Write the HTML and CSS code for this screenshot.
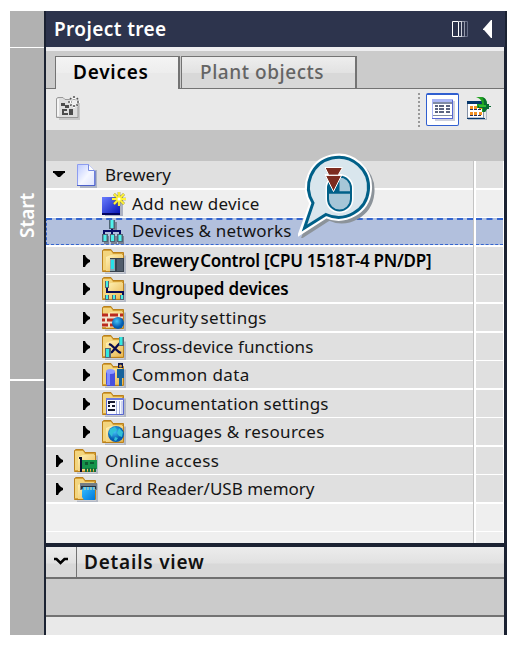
FILE: index.html
```html
<!DOCTYPE html>
<html lang="en">
<head>
<meta charset="utf-8">
<title>Project tree</title>
<link rel="stylesheet" href="styles.css">
</head>
<body>
<svg class="defs" width="0" height="0" aria-hidden="true">
  <defs>
    <linearGradient id="gold" x1="0" y1="0" x2="1" y2="1"><stop offset="0" stop-color="#fff3b8"/><stop offset="1" stop-color="#e9b64f"/></linearGradient>
    <linearGradient id="paper" x1="0" y1="0" x2="1" y2="1"><stop offset="0" stop-color="#bdcaff"/><stop offset=".55" stop-color="#f5f7ff"/><stop offset="1" stop-color="#dde3ff"/></linearGradient>
    <linearGradient id="blue" x1="0" y1="0" x2="1" y2="1"><stop offset="0" stop-color="#6a7dff"/><stop offset="1" stop-color="#0714b4"/></linearGradient>
    <linearGradient id="sky" x1="0" y1="0" x2="1" y2="1"><stop offset="0" stop-color="#36bfff"/><stop offset="1" stop-color="#0077da"/></linearGradient>
    <radialGradient id="ball" cx=".4" cy=".35"><stop offset="0" stop-color="#45c4f8"/><stop offset="1" stop-color="#045cb0"/></radialGradient>
    <symbol id="folder" viewBox="0 0 24 26">
      <path d="M3 24.500h19v-17h2v19H3z" fill="#b3b8c4"/>
      <path d="M.5 22.500V2.500L2 1.500h7l2 3h10.500V23.500H.5z" fill="#d5a137" stroke="#bb811b"/>
      <path d="M1 3h8l2 3h9v3H4v13H1z" fill="#f3d57e"/>
      <path d="M4 9l5-2h12v15.500L4 23z" fill="url(#gold)"/>
    </symbol>
    <symbol id="right" viewBox="0 0 14 14"><path d="M4 1h2l1 2 2 2 2 1v2L9 9l-2 2-1 2H4z"/></symbol>
  </defs>
</svg>

<div class="window">
  <aside class="rail">
    <div class="rail-top"></div>
    <div class="rail-start"><span>Start</span></div>
    <div class="rail-rest"></div>
  </aside>
  <main class="panel">
    <header class="title">
      <h1>Project tree</h1>
      <svg width="44" height="20" viewBox="0 0 44 20">
        <path d="M.5 2.500h6v15h-6z" fill="none" stroke="#fff"/>
        <path d="M7 2.500h3M7 17.500h3M9.500 2v16" stroke="#cdd0d9"/><path d="M10 2.500h3M10 17.500h3M12.500 2v16" stroke="#9499ab"/><path d="M13 2.500h2.500v15H13" fill="none" stroke="#666d86"/>
        <path d="M31 10v1h1l7 8h1V1h-1l-7 8z" fill="#fff"/>
      </svg>
    </header>
    <nav class="tabs">
      <div class="tab active"><span>Devices</span></div>
      <div class="tab"><span>Plant objects</span></div>
    </nav>
    <div class="toolbar">
      <svg class="new-folder" width="24" height="24" viewBox="0 0 24 24">
        <path d="M3 21h19V5h2v19H3z" fill="#c8c8c8"/>
        <path d="M.5 21.500v-19L2 1.500h5l2 2h13v18z" fill="#dedede" stroke="#999"/>
        <path d="M2 3v17" stroke="#f5f5f5" stroke-width="2"/>
        <path d="M5 7h4v3H5zM6 13h5v2H8v2h4v2H6zM13 13h4v6h-4zM9 9h4v3H9z" fill="#4c4c4c"/>
        <path d="M18 0v12M12 6h12M14 2l8 8M22 2l-8 8" stroke="#fff" stroke-width="2"/>
        <path d="M18 0v12M12 6h12M14 2l8 8M22 2l-8 8" stroke="#555" stroke-width="1.600" stroke-dasharray="2 1"/><circle cx="18" cy="6" r="2.500" fill="#eee"/>
      </svg>
      <i class="grip"></i>
      <div class="view-button">
        <svg width="24" height="24" viewBox="0 0 24 24" shape-rendering="crispEdges">
          <path d="M3 3h20v20H3z" fill="#ccd0de"/><path d="M0 1h21v19H0z" fill="#fff"/><path d="M0 1h21v3H0zM0 4h1v17H0z" fill="#aab6f6"/>
          <path d="M1 4h19v2H1zM1 17h19v1H1z" fill="#7f8ba5"/>
          <path d="M0 20h21v1H0zM20 2h1v18h-1z" fill="#5767d3"/>
          <path d="M3 7h3v2H3zm4 0h5v2H7zm7 0h4v2h-4zM3 10h3v2H3zm4 0h5v2H7zm7 0h4v2h-4zM3 13h3v2H3zm4 0h5v2H7zm7 0h4v2h-4z" fill="#5b6480"/>
        </svg>
      </div>
      <svg class="export" width="26" height="26" viewBox="0 0 26 26">
        <path d="M2 23h18V8h1v16H2z" fill="#aeb7c5"/><path d="M1.500 6h16v16h-16z" fill="#fff" stroke="#8491a6"/><path d="M1 5h18v3H1zM1 22h18v1H1z" fill="#06376b"/>
        <path d="M4 10h3v3H4zm4 0h3v3H8zm5 0h3v3h-3zM4 16h3v3H4zm4 0h3v3H8zm5 0h3v3h-3z" fill="#f49120"/><path d="M4 13.500h12M4 19.500h12" stroke="#27305a" stroke-dasharray="3 1"/>
        <path d="M10 1h6c4 1 5 4 5 7h2v2h2v1h-2v2h-2l-2 3h-3v-4h-5V8h5c0-3-1-5-6-7z" fill="#22a31f"/><path d="M16 1c3 1 5 4 5 7h2v2h2v1h-2v2h-2l-2 3h-2v-4h-5v-2h6c0-4 0-7-2-9z" fill="#086c31"/><path d="M13 9h7v2h-7z" fill="#2fbd31"/>
      </svg>
    </div>
    <div class="column-head"></div>

    <div class="tree">
      <div class="row root"><div class="cell">
        <svg class="arrow" viewBox="0 0 14 14"><path d="M1 3h12v2h-1l-2 2-2 2H6L4 7 2 5H1z"/></svg>
        <svg class="icon" viewBox="0 0 24 26"><path d="M6 24h15V8h2v18H6z" fill="#aeb5c5"/><path d="M3.500 2.500h11l6 6v15h-17z" fill="url(#paper)" stroke="#8d9df0"/><path d="M14.500 2.500v6h6" fill="#fff" stroke="#778be2"/><path d="M3 23.500h18V9" fill="none" stroke="#4c61cb"/></svg>
        <span class="t-brewery">Brewery</span></div><div class="cell side"></div></div>
      <div class="row sub light"><div class="cell">
        <i class="arrow"></i>
        <svg class="icon" viewBox="0 0 24 26"><path d="M3 6h18v19H3z" fill="#adb2c2"/><path d="M0 6h18v17H0z" fill="url(#blue)"/><path d="M0 23h18" stroke="#030461" stroke-width="2"/><path d="M17 1v14M10 8h14M12 3l10 10M22 3l-10 10" stroke="#8c8238" stroke-width="2.600"/><path d="M17 1v14M10 8h14M12 3l10 10M22 3l-10 10" stroke="#fff43b" stroke-width="1.800"/><circle cx="17" cy="8" r="1.500" fill="#fff"/></svg>
        <span class="t-add">Add new device</span></div><div class="cell side"></div></div>
      <div class="row sub selected"><div class="cell">
        <i class="arrow"></i>
        <svg class="icon" viewBox="0 0 24 26"><path d="M9 3h6v8H9zM2 17h5v8H2zm7 0h6v8H9zm7 0h6v8h-6z" fill="#7b8293"/><path d="M7 1h6v9H7zM0 15h6v8H0zm8 0h5v8H8zm7 0h6v8h-6z" fill="#4e6474"/><path d="M8.500 1h3v8h-3zM1.500 16h3v6h-3zm7.500 0h3v6H9zm7.500 0h3v6h-3z" fill="#4ff2ed"/><path d="M10 10v5M2 15v-3h16v3" stroke="#090d66" stroke-width="2" fill="none"/></svg>
        <span class="t-dev">Devices &amp; networks</span></div><div class="cell side"></div></div>
      <div class="row sub bold"><div class="cell">
        <svg class="arrow"><use href="#right"/></svg>
        <svg class="icon" viewBox="0 0 24 26"><use href="#folder"/><path d="M8 10h14v14H8z" fill="#38424e"/><path d="M8 11h5v12H8z" fill="#8ba7b0"/><path d="M9 12h3v9H9z" fill="#27e2e7"/><path d="M15 11h6v12h-6z" fill="#515d6b"/></svg>
        <span class="t-control">Brewery<b class="narrow-space"> </b>Control [CPU 1518<b class="narrow-space"> </b>T-4 PN/DP]</span></div><div class="cell side"></div></div>
      <div class="row sub bold"><div class="cell">
        <svg class="arrow"><use href="#right"/></svg>
        <svg class="icon" viewBox="0 0 24 26"><use href="#folder"/><path d="M5 12v4h16v4" fill="none" stroke="#070b55" stroke-width="2"/><path d="M3 5h4v7H3zM3 19h4v5H3zm7 0h4v5h-4zm8 0h4v5h-4z" fill="#536371"/><path d="M4 5h2v6H4zM4 19h2v4H4zm7 0h2v4h-2zm8 0h2v4h-2z" fill="#42eee5"/></svg>
        <span class="t-group">Ungrouped devices</span></div><div class="cell side"></div></div>
      <div class="row sub"><div class="cell">
        <svg class="arrow"><use href="#right"/></svg>
        <svg class="icon" viewBox="0 0 24 26"><use href="#folder"/><path d="M0 9h21v13H0z" fill="#f1e3cc"/><path d="M0 10h6m2 0h8m2 0h3M0 15h3m2 0h9m2 0h5M0 20h6m2 0h8" stroke="#bb2c20" stroke-width="3"/><circle cx="16" cy="18" r="6" fill="url(#ball)"/></svg>
        <span class="t-security">Security<b class="narrow-space"> </b>settings</span></div><div class="cell side"></div></div>
      <div class="row sub"><div class="cell">
        <svg class="arrow"><use href="#right"/></svg>
        <svg class="icon" viewBox="0 0 24 26"><use href="#folder"/><path d="M7 10l2 1 8 7 2 1M18 9l-2 2-6 7-3 1" fill="none" stroke="#080b4d" stroke-width="2.200"/><path d="M17 3h5v9h-5zM3 14h6v10H3z" fill="#566877"/><path d="M17.500 3h3v8h-3zM4 15h3v8H4z" fill="#33e8e0"/></svg>
        <span class="t-cross">Cross-device functions</span></div><div class="cell side"></div></div>
      <div class="row sub"><div class="cell">
        <svg class="arrow"><use href="#right"/></svg>
        <svg class="icon" viewBox="0 0 24 26"><use href="#folder"/><path d="M4 10h9v14H5l-1-2z" fill="#4851df"/><path d="M5 10h3v13H5z" fill="#808cff"/><ellipse cx="8.500" cy="9.500" rx="4.500" ry="2.500" fill="#8d9aff"/><path d="M16 1h5v5h-5z" fill="#10184c"/><path d="M15 7h7v9h-2v8h-3v-8h-2V8z" fill="#17639b"/><circle cx="18.500" cy="4" r="1.500" fill="#d9a247"/></svg>
        <span class="t-common">Common data</span></div><div class="cell side"></div></div>
      <div class="row sub"><div class="cell">
        <svg class="arrow"><use href="#right"/></svg>
        <svg class="icon" viewBox="0 0 24 26"><use href="#folder"/><path d="M4.500 7.500h17v16h-17z" fill="#f7f9ff" stroke="#5867d3"/><path d="M4 8h18" stroke="#6c79dc" stroke-width="2"/><path d="M14.500 10v13M17.500 10v13M20 10v13" stroke="#a5b1dd"/><path d="M6 11h7M6 15h2m2 0h3M6 19h7M7 11v2" stroke="#14182f" stroke-width="2"/></svg>
        <span class="t-doc">Documentation settings</span></div><div class="cell side"></div></div>
      <div class="row sub"><div class="cell">
        <svg class="arrow"><use href="#right"/></svg>
        <svg class="icon" viewBox="0 0 24 26"><use href="#folder"/><circle cx="14" cy="15" r="8" fill="url(#ball)"/><path d="M8 10l5-2 2 3-4 3-1 4-3-4zM17 9l4 4-1 5-3-1-2-3zM13 18l3 1-2 3-2-1z" fill="#30c1d6"/></svg>
        <span class="t-lang">Languages &amp; resources</span></div><div class="cell side"></div></div>
      <div class="row root"><div class="cell">
        <svg class="arrow"><use href="#right"/></svg>
        <svg class="icon" viewBox="0 0 24 26"><use href="#folder"/><path d="M5 10h2v14" fill="none" stroke="#080b31" stroke-width="2"/><path d="M8 12h15v9H8z" fill="#16934b"/><path d="M11 14h3v3h-3zm5 0h4v2h-4z" fill="#0d5931"/><path d="M12 20v4m3-4v4m3-4v4m3-4v4" stroke="#126e38" stroke-width="2"/></svg>
        <span class="t-online">Online access</span></div><div class="cell side"></div></div>
      <div class="row root"><div class="cell">
        <svg class="arrow"><use href="#right"/></svg>
        <svg class="icon" viewBox="0 0 24 26"><use href="#folder"/><path d="M6 7h17v7H6z" fill="#737d86"/><path d="M7 10h15v3H7z" fill="#28313c"/><path d="M9 11h12v13H10l-2-3v-6z" fill="url(#sky)"/><path d="M11 11v3m3-3v3m3-3v3m3-3v3" stroke="#e2e0a0"/></svg>
        <span class="t-card">Card Reader/USB memory</span></div><div class="cell side"></div></div>
      <div class="row light"><div class="cell"></div><div class="cell side"></div></div>
      <div class="row light"><div class="cell"></div><div class="cell side"></div></div>
    </div>

    <div class="details">
      <div class="chevron"><svg width="16" height="10" viewBox="0 0 16 10"><path d="M1 2h2.500l4 4 4-4H15" fill="none" stroke="#000" stroke-width="2.600"/></svg></div>
      <h2>Details view</h2>
    </div>
    <div class="details-head"></div>
    <div class="details-body"></div>
  </main>
</div>

<svg class="callout" width="82" height="88" viewBox="298 150 82 88">
  <path d="M313 203A30 30 0 1 1 326 214.500L303.500 229z" fill="#8c939a" stroke="#8c939a" stroke-width="6" transform="translate(3 3)"/>
  <path d="M313 203A30 30 0 1 1 326 214.500L303.500 229z" fill="#fff" stroke="#fff" stroke-width="7"/>
  <path d="M313 203A30 30 0 1 1 326 214.500L304.500 228z" fill="#d9e6ed" stroke="#006088" stroke-width="3"/>
  <rect x="328" y="176.500" width="23" height="34" rx="11.500" fill="#a6c6d7" stroke="#fff" stroke-width="5"/>
  <rect x="328" y="176.500" width="23" height="34" rx="11.500" fill="#a6c6d7" stroke="#006088" stroke-width="2"/>
  <path d="M328 192v-5q1-10 11.500-10.500V192z" fill="#006088"/><path d="M328 192.500h23" stroke="#006088" stroke-width="2.500"/>
  <path d="M325 167.500h17.500l-4 7H342l-8.500 17-8.500-17h3.500z" fill="#7d2c1f" stroke="#fff"/>
  <path d="M325 175.300h17" stroke="#fff" stroke-width="1.300"/>
</svg>
</body>
</html>
```
FILE: styles.css
```css
* { box-sizing: border-box; }
body { margin: 0; padding: 11px 0 0 10px; width: 518px; height: 645px; overflow: hidden; position: relative; background: #fff; color: #151515; font-family: "Noto Sans", "Open Sans", sans-serif; }
svg { display: block; flex: none; }
.defs { position: absolute; }
.window { display: flex; width: 497px; height: 624px; }
.rail { width: 34px; display: flex; flex-direction: column; gap: 1px; }
.rail > div { background: #b1b1b1; }
.rail-top { height: 36px; }
.rail-start { height: 331px; display: flex; justify-content: center; padding-top: 142px; }
.rail-start span { writing-mode: vertical-rl; transform: rotate(180deg); height: 50px; line-height: 32px; text-align: center; color: #fff; font-size: 19px; font-weight: 600; }
.rail-rest { flex: 1; margin-top: 1px; }
.panel { width: 463px; border: solid #1b2232; border-width: 0 3px 0 2px; }
h1, h2 { margin: 0; font-weight: 600; white-space: nowrap; }
.title { height: 36px; display: flex; justify-content: space-between; align-items: center; padding: 0 9px 0 8px; background: #2d344d; margin-right: -1px; color: #fff; }
.title h1 { font-size: 19px; line-height: 36px; letter-spacing: .4px; }
.tabs { height: 42px; display: flex; align-items: flex-end; border-top: 4px solid #eeeef0; border-bottom: 1px solid #737373; background: #cbcbcb; padding-left: 9px; }
.tab { height: 32px; width: 176px; border: solid #737373; border-width: 1px 2px 0 1px; background: linear-gradient(#ececec 0 8%, #e2e2e2 50%, #d8d8d8 51%); color: #646464; padding-left: 18px; font-size: 19px; font-weight: 500; letter-spacing: .55px; line-height: 30px; white-space: nowrap; }
.tab.active { width: 125px; height: 33px; margin: 0 1px -1px 0; padding-left: 17px; font-weight: 600; letter-spacing: .75px; background: linear-gradient(#f4f4f4, #ededed 50%, #e9e9e9 51%); color: #000; }
.toolbar { height: 41px; display: flex; align-items: center; background: #e9e9e9; }
.new-folder { margin: -3px 0 0 10px; }
.grip { width: 2px; height: 35px; margin: 1px 6px 0 338px; background: repeating-linear-gradient(#999 0 2px, transparent 2px 4px); }
.view-button { width: 33px; height: 33px; border: 1px solid #305fd0; border-top-width: 2px; border-radius: 2px; padding: 3px 0 0 5px; background: #fff; }
.export { margin: -2px 0 0 7px; }
.column-head { height: 31px; background: #c3c3c3; }
.tree { height: 382px; display: grid; grid-template-rows: 29px 28px 29px 28px 29px 29px 28px 29px 28px 29px 28px 29px 28px 11px; background: linear-gradient(90deg, #fff 427px, #c4c4c4 427px 428px, #fff 428px); overflow: hidden; }
.row { display: grid; grid-template-columns: 427px 27px; column-gap: 3px; font-size: 17px; min-height: 0; }
.cell { display: flex; align-items: center; height: 27px; background: #e0e0e0; min-height: 0; overflow: hidden; }
.light .cell { background: #efefef; }
.row .cell > span { white-space: pre; line-height: 26px; }
.bold { font-weight: 600; color: #000; }
.narrow-space { font-size: 6px; line-height: 0; }
.t-brewery { letter-spacing: .05px; }
.t-add { letter-spacing: .25px; }
.t-dev { letter-spacing: .2px; }
.t-control { letter-spacing: -.25px; }
.t-group { letter-spacing: -.17px; }
.t-security { letter-spacing: .35px; }
.t-cross { letter-spacing: .12px; }
.t-common { letter-spacing: .35px; }
.t-doc { letter-spacing: .2px; }
.t-lang { letter-spacing: .28px; }
.t-online { letter-spacing: .42px; }
.arrow { width: 14px; height: 14px; margin: 0 8px 0 6px; flex: none; }
.icon { width: 24px; height: 26px; margin-right: 7px; }
.sub .arrow { margin: 0 9px 0 33px; }
.sub .icon { margin-right: 6px; }
.selected { position: relative; }
.selected .cell { background: #b2c0dd; border-top: 2px dashed #3465cf; border-bottom: 1px dashed #3465cf; }
.selected .cell:first-child { border-left: 1px dashed #3465cf; }
.selected .arrow { margin-left: 32px; }
.selected .cell > span { line-height: 24px; margin-top: -2px; }
.details { height: 36px; border-top: 4px solid #1b2232; border-bottom: 2px solid #707070; background: linear-gradient(#ececec, #e1e1e1 54%, #d8d8d8 56%); display: flex; align-items: center; }
.chevron { width: 31px; height: 100%; border-right: 1px solid #737373; display: flex; align-items: center; padding-left: 7px; }
.details h2 { padding-left: 7px; font-size: 19px; line-height: 30px; letter-spacing: .78px; color: #111; }
.details-head { height: 38px; background: #cbcbcb; border-bottom: 2px solid #737373; }
.details-body { height: 18px; background: #e9e9e9; }
.callout { position: absolute; left: 298px; top: 150px; }
```
